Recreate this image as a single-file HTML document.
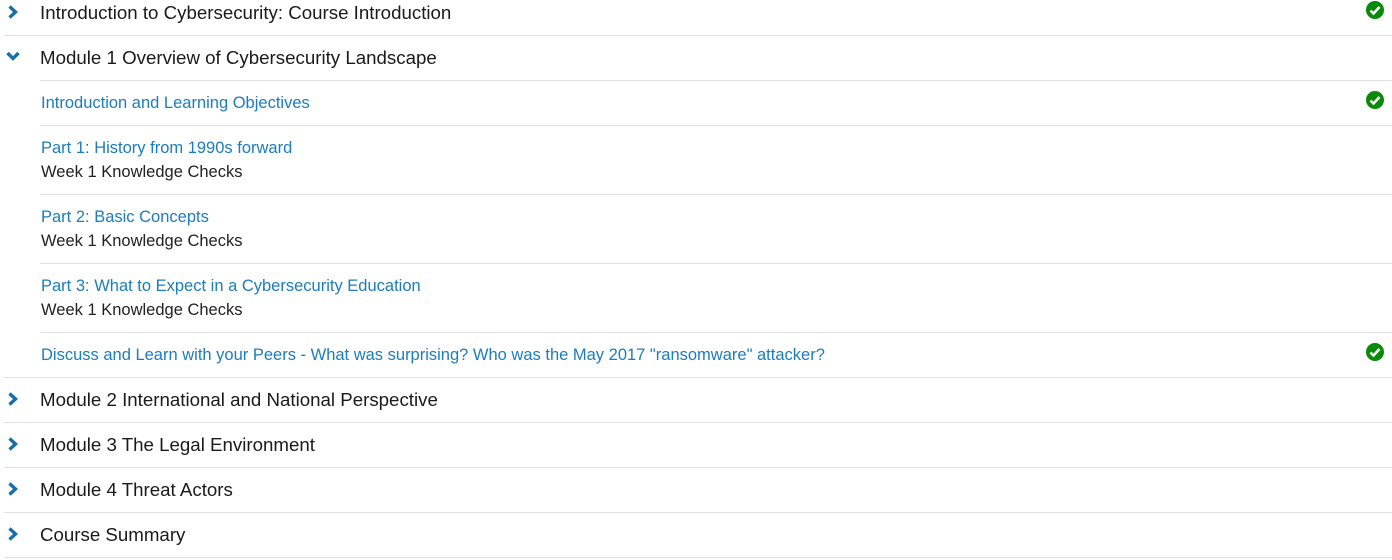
<!DOCTYPE html><html><head><style>
body{margin:0;width:1392px;height:560px;background:#fff;font-family:"Liberation Sans",sans-serif;position:relative;overflow:hidden}
.t{position:absolute;white-space:nowrap}
.h{font-size:18.7px;color:#1a1a1a;left:40px}
.l{font-size:16.5px;color:#1b7dbf;left:41px}
.k{font-size:16.5px;color:#222;left:41px}
.ln{position:absolute;height:1px;background:#e2e2e2;right:0}
.ck{position:absolute;left:1366px;width:18px;height:18px}
.cv{position:absolute;left:5px;width:16px;height:16px}
</style></head><body>
<svg width="0" height="0" style="position:absolute"><defs>
<g id="ck"><circle cx="9" cy="9" r="9" fill="#0a8a0a"/><path d="M4.5 9.5l3 3 6-6.5" stroke="#fff" stroke-width="2.6" fill="none"/></g>
<g id="r"><path d="M4.5 2.5l6 5.5-6 5.5" stroke="#1a6fa8" stroke-width="3.4" fill="none"/></g>
<g id="d"><path d="M2.5 5l5.5 5.5 5.5-5.5" stroke="#1a6fa8" stroke-width="3.4" fill="none"/></g>
</defs></svg>

<svg class="cv" style="top:4px"><use href="#r"/></svg>
<div class="t h" style="top:2px">Introduction to Cybersecurity: Course Introduction</div>
<svg class="ck" style="top:1px"><use href="#ck"/></svg>
<div class="ln" style="top:35px;left:4px"></div>

<svg class="cv" style="top:48px"><use href="#d"/></svg>
<div class="t h" style="top:47px">Module 1 Overview of Cybersecurity Landscape</div>
<div class="ln" style="top:80px;left:40px"></div>

<div class="t l" style="top:94px">Introduction and Learning Objectives</div>
<svg class="ck" style="top:91px"><use href="#ck"/></svg>
<div class="ln" style="top:125px;left:40px"></div>

<div class="t l" style="top:139px">Part 1: History from 1990s forward</div>
<div class="t k" style="top:163px">Week 1 Knowledge Checks</div>
<div class="ln" style="top:194px;left:40px"></div>

<div class="t l" style="top:208px">Part 2: Basic Concepts</div>
<div class="t k" style="top:232px">Week 1 Knowledge Checks</div>
<div class="ln" style="top:263px;left:40px"></div>

<div class="t l" style="top:277px">Part 3: What to Expect in a Cybersecurity Education</div>
<div class="t k" style="top:301px">Week 1 Knowledge Checks</div>
<div class="ln" style="top:332px;left:40px"></div>

<div class="t l" style="top:346px">Discuss and Learn with your Peers - What was surprising? Who was the May 2017 "ransomware" attacker?</div>
<svg class="ck" style="top:343px"><use href="#ck"/></svg>
<div class="ln" style="top:377px;left:4px"></div>

<svg class="cv" style="top:391px"><use href="#r"/></svg>
<div class="t h" style="top:389px">Module 2 International and National Perspective</div>
<div class="ln" style="top:422px;left:4px"></div>

<svg class="cv" style="top:436px"><use href="#r"/></svg>
<div class="t h" style="top:434px">Module 3 The Legal Environment</div>
<div class="ln" style="top:467px;left:4px"></div>

<svg class="cv" style="top:481px"><use href="#r"/></svg>
<div class="t h" style="top:479px">Module 4 Threat Actors</div>
<div class="ln" style="top:512px;left:4px"></div>

<svg class="cv" style="top:526px"><use href="#r"/></svg>
<div class="t h" style="top:524px">Course Summary</div>
<div class="ln" style="top:557px;left:4px"></div>
</body></html>
